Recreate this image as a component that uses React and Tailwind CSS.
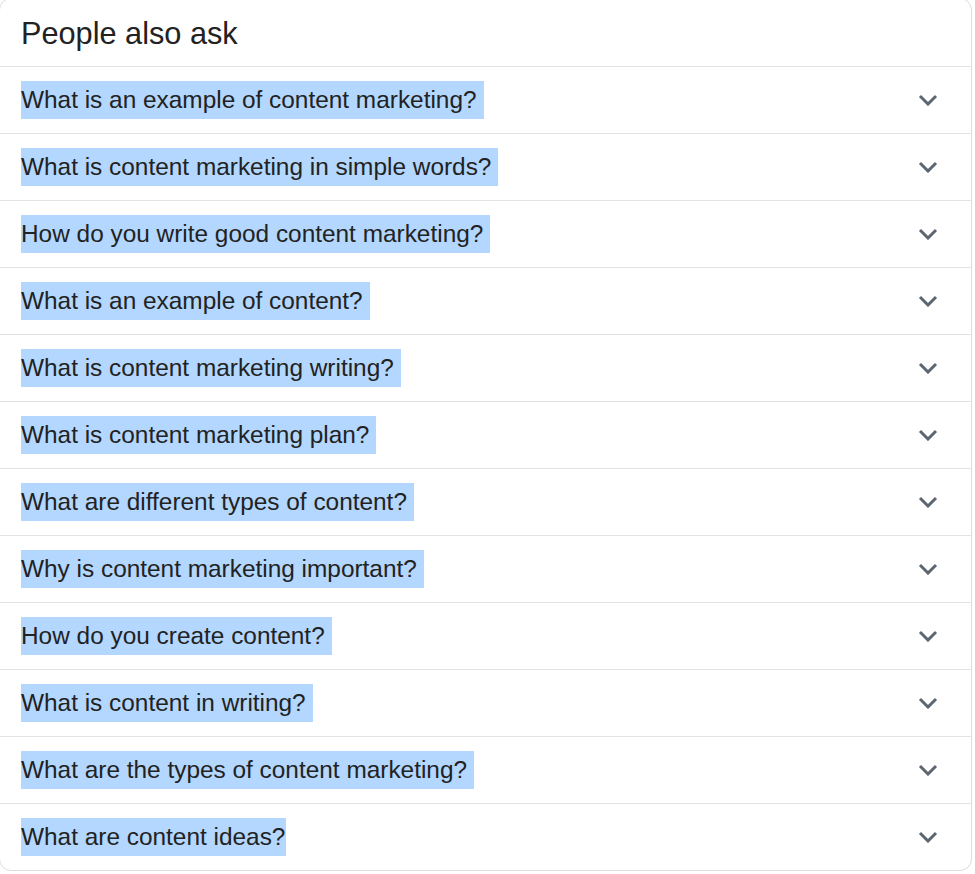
import React from "react";

const questions = [
  "What is an example of content marketing?",
  "What is content marketing in simple words?",
  "How do you write good content marketing?",
  "What is an example of content?",
  "What is content marketing writing?",
  "What is content marketing plan?",
  "What are different types of content?",
  "Why is content marketing important?",
  "How do you create content?",
  "What is content in writing?",
  "What are the types of content marketing?",
  "What are content ideas?",
];

function Chevron() {
  return (
    <svg width="20" height="12" viewBox="0 0 20 12" className="shrink-0">
      <path
        d="M2 2 L10 10 L18 2"
        fill="none"
        stroke="#5b6670"
        strokeWidth="3"
        strokeLinecap="butt"
        strokeLinejoin="miter"
      />
    </svg>
  );
}

export default function App() {
  return (
    <div className="bg-white w-[975px] h-[874px] overflow-hidden font-['Liberation_Sans',Arial,sans-serif] text-[#222]">
      <div className="mt-[-2px] ml-[-1px] w-[973px] border border-[#dcdcdc] rounded-[12px] bg-white">
        <div className="h-[67px] flex items-center pl-[21px] pt-[4px]">
          <span className="text-[30.7px] leading-none">People also ask</span>
        </div>
        {questions.map((q, i) => (
          <div
            key={q}
            className="h-[67px] border-t border-[#e3e3e3] flex items-center justify-between pl-[21px] pr-[33px]"
          >
            <span
              className={
                i === questions.length - 1
                  ? "inline-block bg-[#b3d7fe] text-[24.4px] leading-[38px] pr-[1px]"
                  : "inline-block bg-[#b3d7fe] text-[24.4px] leading-[38px] pr-[7px]"
              }
            >
              {q}
            </span>
            <Chevron />
          </div>
        ))}
      </div>
    </div>
  );
}
